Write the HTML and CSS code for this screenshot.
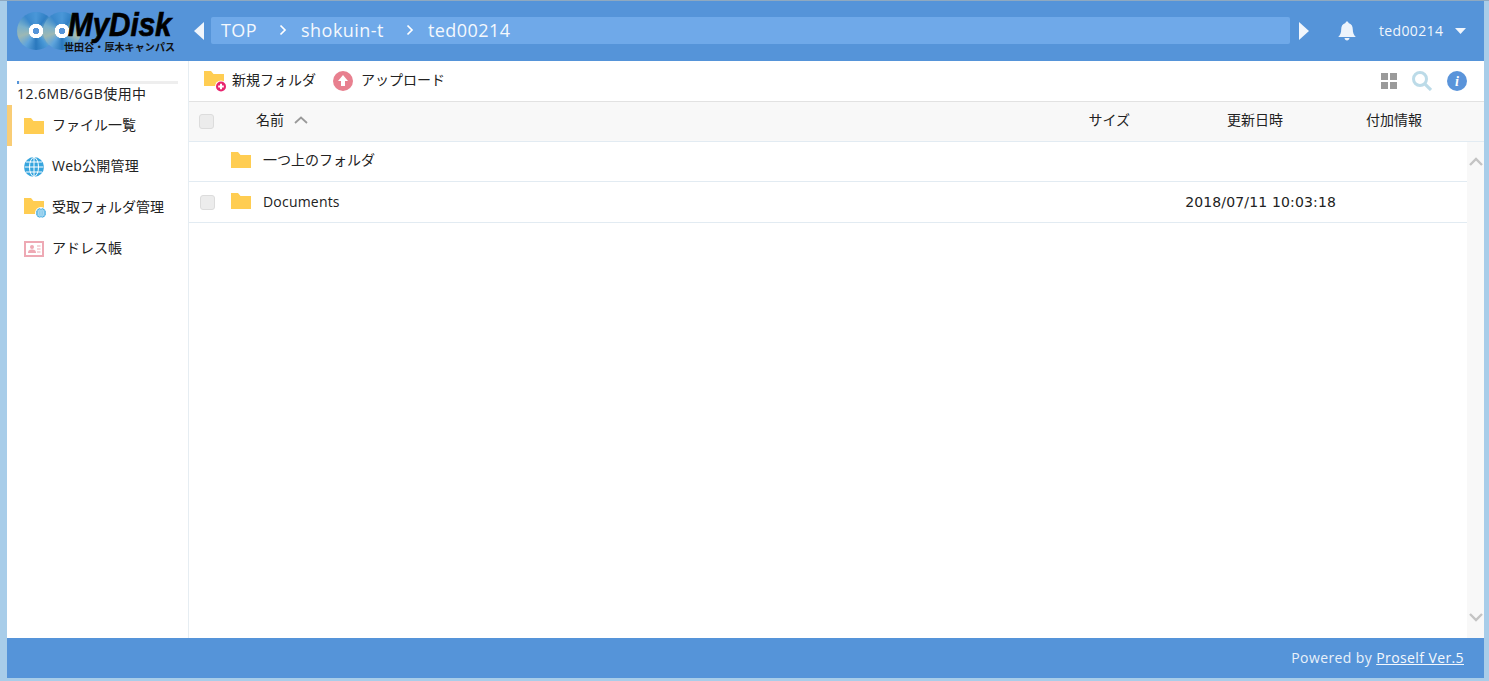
FILE: index.html
```html
<!DOCTYPE html>
<html lang="ja">
<head>
<meta charset="utf-8">
<title>MyDisk</title>
<link rel="stylesheet" href="styles.css">
</head>
<body>
<div class="app">
  <header class="header">
    <div class="logo">
      <div class="discs"><span class="disc"></span><span class="disc disc2"></span></div>
      <div class="logo-text">
        <div class="logo-name">MyDisk</div>
        <div class="logo-sub">世田谷・厚木キャンパス</div>
      </div>
    </div>
    <svg class="nav-arrow" width="10" height="18" viewBox="0 0 10 18"><path d="M10 0V18L0 9Z" fill="#f1f6fc"/></svg>
    <nav class="crumbs">
      <span>TOP</span>
      <svg class="sep" width="8" height="12" viewBox="0 0 8 12"><path d="M1.5 1.5L6 6L1.5 10.500" fill="none" stroke="#fff" stroke-width="1.700"/></svg>
      <span>shokuin-t</span>
      <svg class="sep" width="8" height="12" viewBox="0 0 8 12"><path d="M1.5 1.5L6 6L1.5 10.500" fill="none" stroke="#fff" stroke-width="1.700"/></svg>
      <span>ted00214</span>
    </nav>
    <svg class="nav-arrow nav-next" width="10" height="18" viewBox="0 0 10 18"><path d="M0 0V18L10 9Z" fill="#f1f6fc"/></svg>
    <svg class="bell" width="20" height="20" viewBox="0 0 20 20"><path d="M10 0.500C11 0.500 11.500 1.200 11.500 2C14.500 2.800 15.800 5.200 15.800 8.500C15.800 12 16.800 14 18.800 16H1.200C3.200 14 4.200 12 4.200 8.500C4.200 5.200 5.500 2.800 8.500 2C8.500 1.200 9 0.500 10 0.500Z M7.500 17H12.500C12.300 18.500 11.300 19.500 10 19.500C8.700 19.500 7.700 18.500 7.500 17Z" fill="#edf4fc"/></svg>
    <span class="user">ted00214</span>
    <svg class="caret" width="11" height="6" viewBox="0 0 11 6"><path d="M0 0H11L5.500 6Z" fill="#f1f6fc"/></svg>
  </header>

  <div class="main">
    <aside class="side">
      <div class="usage">
        <div class="meter"><div class="meter-fill"></div></div>
        <div class="usage-text">12.6MB/6GB使用中</div>
      </div>
      <ul class="menu">
        <li class="menu-item active">
          <span class="menu-ico"><svg width="20" height="16" viewBox="0 0 20 16"><path d="M0 0H7L9.500 3H20V16H0Z" fill="#ffcd52"/></svg></span>
          <span class="menu-label">ファイル一覧</span>
        </li>
        <li class="menu-item">
          <span class="menu-ico"><svg width="20" height="20" viewBox="0 0 20 20"><circle cx="10" cy="10" r="10" fill="#36a5de"/><g fill="none" stroke="#fff" stroke-width="1"><ellipse cx="10" cy="10" rx="4.500" ry="9.500"/><path d="M10 0V20M0.500 10H19.500M2 5H18M2 15H18"/></g></svg></span>
          <span class="menu-label menu-latin">Web公開管理</span>
        </li>
        <li class="menu-item">
          <span class="menu-ico"><svg width="23" height="23" viewBox="0 0 23 23"><path d="M0 2H7L9.500 5H20V18H0Z" fill="#ffcd52"/><circle cx="17" cy="17" r="6" fill="#fff"/><circle cx="17" cy="17" r="5" fill="#36a5de"/><g fill="none" stroke="#fff" stroke-width=".6"><ellipse cx="17" cy="17" rx="2.200" ry="4.800"/><path d="M17 12.200V21.800M12.200 17H21.800M13 15H21M13 19H21"/></g></svg></span>
          <span class="menu-label">受取フォルダ管理</span>
        </li>
        <li class="menu-item">
          <span class="menu-ico"><svg width="20" height="16" viewBox="0 0 20 16"><rect x="1" y="1" width="18" height="14" fill="#fff" stroke="#eea9b4" stroke-width="2"/><circle cx="8" cy="6" r="2" fill="#eea9b4"/><path d="M4 12C4 9 6 8.500 8 8.500C10 8.500 12 9 12 12Z" fill="#eea9b4"/><path d="M13 5H16.500M13 8H16.500M13 11H16.500" stroke="#eea9b4" stroke-width="1.200"/></svg></span>
          <span class="menu-label">アドレス帳</span>
        </li>
      </ul>
    </aside>

    <section class="content">
      <div class="toolbar">
        <button class="tool">
          <svg width="23" height="23" viewBox="0 0 23 23"><path d="M0 1H7L9.500 4H20V16H0Z" fill="#ffcd52"/><circle cx="17" cy="16.500" r="6" fill="#fff"/><circle cx="17" cy="16.500" r="5" fill="#e8246f"/><path d="M14.200 16.500H19.800M17 13.700V19.300" stroke="#fff" stroke-width="2"/></svg>
          <span class="tool-label">新規フォルダ</span>
        </button>
        <button class="tool tool-up">
          <svg width="20" height="20" viewBox="0 0 20 20"><circle cx="10" cy="10" r="10" fill="#e8808f"/><path d="M10 4L15 10H12V15H8V10H5Z" fill="#fff"/></svg>
          <span class="tool-label">アップロード</span>
        </button>
        <div class="tool-right">
          <svg width="16" height="16" viewBox="0 0 16 16"><path d="M0 0H7V7H0ZM9 0H16V7H9ZM0 9H7V16H0ZM9 9H16V16H9Z" fill="#9a9a9a"/></svg>
          <svg width="20" height="20" viewBox="0 0 20 20"><circle cx="8" cy="8" r="6.500" fill="none" stroke="#bcdbe8" stroke-width="3"/><path d="M12.800 12.800L19 19" stroke="#bcdbe8" stroke-width="3.200"/></svg>
          <svg width="20" height="20" viewBox="0 0 20 20"><circle cx="10" cy="10" r="10" fill="#5a94da"/><text x="10" y="15" text-anchor="middle" class="info-i">i</text></svg>
        </div>
      </div>

      <div class="thead">
        <span class="check"></span>
        <span class="th th-name">名前</span>
        <svg class="sort" width="14" height="8" viewBox="0 0 14 8"><path d="M1 7L7 1.500L13 7" fill="none" stroke="#999" stroke-width="1.800"/></svg>
        <span class="th th-size">サイズ</span>
        <span class="th th-date">更新日時</span>
        <span class="th th-info">付加情報</span>
      </div>

      <div class="tbody">
        <div class="rows">
          <div class="row">
            <span class="check check-none"></span>
            <svg class="folder" width="20" height="16" viewBox="0 0 20 16"><path d="M0 0H7L9.500 3H20V16H0Z" fill="#ffcd52"/></svg>
            <span class="name">一つ上のフォルダ</span>
          </div>
          <div class="row">
            <span class="check"></span>
            <svg class="folder" width="20" height="16" viewBox="0 0 20 16"><path d="M0 0H7L9.500 3H20V16H0Z" fill="#ffcd52"/></svg>
            <span class="name name-latin">Documents</span>
            <span class="date">2018/07/11 10:03:18</span>
          </div>
        </div>
        <div class="scrollbar">
          <svg width="14" height="9" viewBox="0 0 14 9"><path d="M1 8L7 2L13 8" fill="none" stroke="#c4c4c4" stroke-width="2.400"/></svg>
          <svg width="14" height="9" viewBox="0 0 14 9"><path d="M1 1L7 7L13 1" fill="none" stroke="#c4c4c4" stroke-width="2.400"/></svg>
        </div>
      </div>
    </section>
  </div>

  <footer class="footer"><span class="powered">Powered by&nbsp;<a href="#">Proself Ver.5</a></span></footer>
</div>
</body>
</html>
```
FILE: styles.css
```css
* { box-sizing: border-box; }
html, body { height: 100%; }
body {
  margin: 0;
  padding: 0 5px 3px 7px;
  background: #a8cde9;
  border-top: 1px solid #8fa9c0;
  font-family: "Open Sans", "Noto Sans CJK JP", sans-serif;
  font-size: 14px;
  line-height: 20px;
  color: #222;
  overflow: hidden;
}
.app { display: flex; flex-direction: column; height: 100%; background: #fff; }

.header {
  flex: none;
  height: 60px;
  padding-bottom: 1px;
  background: #5594d9;
  display: flex;
  align-items: center;
  color: #f1f6fc;
}
.logo { width: 183px; height: 60px; padding-left: 10px; display: flex; flex: none; }
.discs { position: relative; width: 62px; margin-top: 11px; flex: none; }
.disc {
  position: absolute;
  left: 0; top: 0;
  width: 38px; height: 38px;
  border-radius: 50%;
  background:
    radial-gradient(circle, #5594d9 0 3px, #fff 3.5px 7px, transparent 7.5px),
    conic-gradient(#4a97d8, #2f7fc4, #7fb0c8, #a8bcae, #4b9ad8, #2a78bd, #5fa4dc, #9cb8b4, #78b0cc, #3a88cc, #4a97d8);
}
.disc2 { left: 26px; }
.logo-text { margin-left: -11px; position: relative; }
.logo-name {
  font-family: "Liberation Sans", sans-serif;
  font-size: 34px;
  font-weight: 700;
  font-style: italic;
  line-height: 30px;
  margin-top: 8px;
  color: #000;
  white-space: nowrap;
  -webkit-text-stroke: 0.7px #000;
  transform: scaleX(.87);
  transform-origin: left center;
}
.logo-sub {
  font-family: "Noto Sans CJK JP", sans-serif;
  font-size: 10px;
  font-weight: 700;
  line-height: 12px;
  margin: 2px 0 0 -4px;
  letter-spacing: .1px;
  color: #111;
  white-space: nowrap;
}
.nav-arrow { flex: none; margin-left: 4px; }
.nav-next { margin-left: 0; }
.crumbs {
  flex: none;
  width: 1079px;
  height: 27px;
  margin: 0 9px 0 7px;
  padding: 0 0 2px 10px;
  background: #6fa9e9;
  border-radius: 2px;
  display: flex;
  align-items: center;
  font-size: 18px;
  letter-spacing: .45px;
  color: #f4f8fd;
}
.sep { margin: 0 14px 0 22px; }
.bell { flex: none; margin-left: 28px; }
.user { margin-left: 22px; font-size: 14px; letter-spacing: .35px; }
.caret { margin-left: 12px; }

.main { flex: 1; display: flex; min-height: 0; }
.side { flex: none; width: 182px; border-right: 1px solid #e6edf2; }
.usage { padding: 20px 10px 1px; }
.meter { height: 3px; background: #eee; }
.meter-fill { width: 2px; height: 3px; background: #5594d9; }
.usage-text { font-size: 14px; line-height: 20px; letter-spacing: .45px; color: #222; }
.menu { list-style: none; margin: 0; padding: 0; }
.menu-item {
  height: 41px;
  display: flex;
  align-items: center;
  padding-left: 17px;
}
.menu-ico { flex: none; width: 28px; display: flex; align-items: center; }
.menu-label { padding-bottom: 2px; }
.menu-latin { letter-spacing: .25px; }
.menu-item.active { box-shadow: inset 5px 0 0 #f9cd76; }

.content { flex: 1; display: flex; flex-direction: column; min-width: 0; }
.toolbar {
  flex: none;
  height: 41px;
  display: flex;
  align-items: center;
  padding-left: 15px;
  border-bottom: 1px solid #e2e2e2;
}
.tool {
  display: flex;
  align-items: center;
  gap: 5px;
  border: 0;
  padding: 0;
  background: none;
  font: inherit;
  color: #222;
}
.tool-label { padding-bottom: 3px; }
.tool-up { margin-left: 17px; gap: 8px; }
.tool-right { margin-left: auto; display: flex; align-items: center; gap: 15px; padding-right: 17px; }
.info-i { font-family: "Liberation Serif", serif; font-size: 14px; font-weight: 700; font-style: italic; fill: #fff; }

.thead {
  flex: none;
  height: 40px;
  background: #f8f8f8;
  border-bottom: 1px solid #e2ebf2;
  display: flex;
  align-items: center;
  padding: 0 0 1px 10px;
}
.th { padding-bottom: 2px; }
.check {
  flex: none;
  width: 15px; height: 15px;
  background: #ececec;
  border: 1px solid #dcdcdc;
  border-radius: 3px;
}
.check-none { visibility: hidden; }
.th-name { margin-left: 42px; }
.sort { margin-left: 10px; margin-top: -2px; }
.th-size { margin-left: auto; }
.th-date { margin-left: 97px; }
.th-info { margin-left: 83px; margin-right: 62px; }

.tbody { flex: 1; display: flex; min-height: 0; }
.rows { flex: 1; min-width: 0; }
.row {
  height: 40px;
  display: flex;
  align-items: center;
  padding-left: 11px;
  border-bottom: 1px solid #e2ebf2;
}
.row + .row { height: 41px; }
.folder { flex: none; margin-left: 16px; margin-top: -3px; }
.name { margin-left: 12px; padding-bottom: 3px; }
.name-latin { letter-spacing: .2px; padding-bottom: 1px; }
.date {
  margin-left: auto;
  margin-right: 131px;
  padding-bottom: 1px;
  font-family: "DejaVu Sans", sans-serif;
  font-size: 14px;
  letter-spacing: .15px;
}
.scrollbar {
  flex: none;
  width: 17px;
  background: #f8f8f8;
  display: flex;
  flex-direction: column;
  align-items: center;
  justify-content: space-between;
  padding: 15px 0 16px;
}

.footer {
  flex: none;
  height: 40px;
  background: #5594d9;
  color: #e9f1fa;
  display: flex;
  align-items: center;
  justify-content: flex-end;
  padding-right: 20px;
  font-size: 14px;
}
.powered { letter-spacing: .4px; padding-bottom: 1px; }
.footer a { color: #f4f8fd; }
```
